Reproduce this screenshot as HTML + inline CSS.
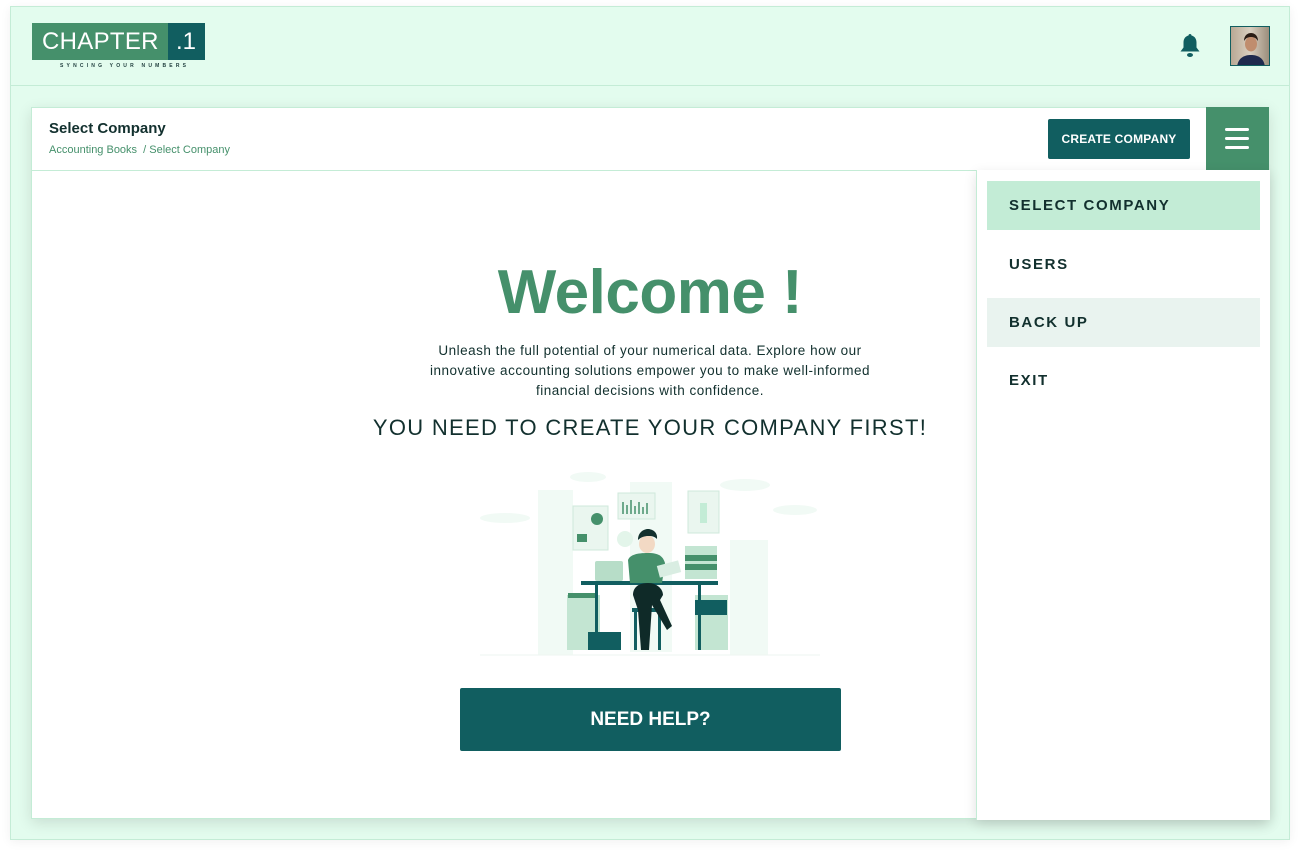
<!DOCTYPE html>
<html><head><meta charset="utf-8"><style>
*{margin:0;padding:0;box-sizing:border-box}
body{width:1300px;height:852px;background:#fff;font-family:"Liberation Sans",sans-serif;position:relative;overflow:hidden}
.frame{position:absolute;left:10px;top:6px;width:1280px;height:834px;background:#e3fcee;border:1px solid #c4ecd6;box-shadow:0 2px 10px rgba(0,0,0,0.06)}
.hdrline{position:absolute;left:10px;top:85px;width:1280px;height:1px;background:#c4ecd6}
.card{position:absolute;left:31px;top:107px;width:1238px;height:712px;background:#fff;border:1px solid #c4ecd6;box-shadow:0 4px 14px rgba(0,0,0,0.12)}
.abs{position:absolute}
</style></head><body>
<div class="frame"></div>
<div class="hdrline"></div>
<div class="abs" style="left:32px;top:23px;width:136px;height:37px;background:#45906b"></div>
<div class="abs" style="left:168px;top:23px;width:37px;height:37px;background:#115e60"></div>
<div class="abs" style="left:42px;top:27px;color:#fff;font-size:24px;line-height:30px;letter-spacing:0.3px">CHAPTER</div>
<div class="abs" style="left:176px;top:27px;color:#fff;font-size:24px;line-height:30px">.1</div>
<div class="abs" style="left:60px;top:63px;color:#1d3b3b;font-size:5px;letter-spacing:3.2px;font-weight:bold">SYNCING YOUR NUMBERS</div>
<svg class="abs" style="left:1178px;top:33px" width="24" height="26" viewBox="0 0 24 26"><path d="M12 1c1 0 1.5.7 1.5 1.5 3.3.8 5 3.5 5 7v5l3 4H2.5l3-4v-5c0-3.5 1.7-6.2 5-7C10.5 1.7 11 1 12 1z" fill="#115e60"/><ellipse cx="12" cy="22" rx="3" ry="2" fill="#115e60"/></svg>
<div class="abs" style="left:1230px;top:26px;width:40px;height:40px;border:1px solid #115e60;background:linear-gradient(90deg,#b9a894,#d9cfc0 50%,#9c8e7c);overflow:hidden">
<svg width="40" height="40" viewBox="0 0 40 40"><path d="M6 40c1-9 7-12 14-12s13 3 14 12z" fill="#1f2a4e"/><ellipse cx="20" cy="17" rx="6" ry="7.5" fill="#c08d6e"/><path d="M13 14c0-6 4-8 7-8s7 2 7 8c-2-3-4-4-7-4s-5 1-7 4z" fill="#2a1c14"/></svg></div>
<div class="card"></div>
<div class="abs" style="left:31px;top:170px;width:946px;height:1px;background:#c4ecd6"></div>
<div class="abs" style="left:49px;top:120px;font-size:15px;font-weight:bold;color:#12302e">Select Company</div>
<div class="abs" style="left:49px;top:144px;font-size:11px;color:#45906b">Accounting Books&nbsp; / Select Company</div>
<div class="abs" style="left:1048px;top:119px;width:142px;height:40px;background:#115e60;border-radius:2px;color:#fff;font-size:12px;font-weight:bold;text-align:center;line-height:40px;letter-spacing:0.2px">CREATE COMPANY</div>
<div class="abs" style="left:1206px;top:107px;width:63px;height:63px;background:#45906b"></div>
<div class="abs" style="left:1225px;top:128px;width:24px;height:3px;background:#fff;border-radius:2px"></div>
<div class="abs" style="left:1225px;top:137px;width:24px;height:3px;background:#fff;border-radius:2px"></div>
<div class="abs" style="left:1225px;top:146px;width:24px;height:3px;background:#fff;border-radius:2px"></div>
<div class="abs" style="left:976px;top:170px;width:294px;height:650px;background:#fff;border-left:1px solid #c4ecd6;box-shadow:0 4px 12px rgba(0,0,0,0.12)"></div>
<div class="abs" style="left:987px;top:181px;width:273px;height:49px;background:#c3ecd6"></div>
<div class="abs" style="left:987px;top:298px;width:273px;height:49px;background:#e9f3ef"></div>
<div class="abs" style="left:1009px;top:197px;font-size:15px;font-weight:bold;letter-spacing:1.6px;color:#12302e">SELECT COMPANY</div>
<div class="abs" style="left:1009px;top:256px;font-size:15px;font-weight:bold;letter-spacing:1.6px;color:#12302e">USERS</div>
<div class="abs" style="left:1009px;top:314px;font-size:15px;font-weight:bold;letter-spacing:1.6px;color:#12302e">BACK UP</div>
<div class="abs" style="left:1009px;top:372px;font-size:15px;font-weight:bold;letter-spacing:1.6px;color:#12302e">EXIT</div>
<div class="abs" style="left:350px;top:257px;width:600px;text-align:center;font-size:62px;font-weight:bold;color:#45906b;letter-spacing:-0.5px">Welcome !</div>
<div class="abs" style="left:300px;top:341px;width:700px;text-align:center;font-size:13.5px;line-height:20px;color:#12302e;letter-spacing:0.5px">Unleash the full potential of your numerical data. Explore how our<br>innovative accounting solutions empower you to make well-informed<br>financial decisions with confidence.</div>
<div class="abs" style="left:300px;top:415px;width:700px;text-align:center;font-size:22px;color:#12302e;letter-spacing:1.3px">YOU NEED TO CREATE YOUR COMPANY FIRST!</div>
<svg class="abs" style="left:470px;top:460px" width="360" height="210" viewBox="0 0 360 210">
<g fill="#f1faf5"><rect x="68" y="30" width="35" height="165"/><rect x="160" y="22" width="42" height="170"/><rect x="260" y="80" width="38" height="115"/><ellipse cx="35" cy="58" rx="25" ry="5"/><ellipse cx="325" cy="50" rx="22" ry="5"/><ellipse cx="275" cy="25" rx="25" ry="6"/><ellipse cx="118" cy="17" rx="18" ry="5"/></g>
<line x1="10" y1="195" x2="350" y2="195" stroke="#eef5f1"/>
<rect x="103" y="46" width="35" height="44" fill="#eaf6ef" stroke="#cfe8db"/><circle cx="127" cy="59" r="6" fill="#45906b"/><rect x="107" y="74" width="10" height="8" fill="#45906b"/>
<rect x="148" y="33" width="37" height="26" fill="#eaf6ef" stroke="#cfe8db"/><path d="M153 54V42M157 54V45M161 54V40M165 54V46M169 54V42M173 54V47M177 54V43" stroke="#45906b" stroke-width="1.5"/>
<rect x="218" y="31" width="31" height="42" fill="#eaf6ef" stroke="#cfe8db"/><rect x="230" y="43" width="7" height="20" fill="#c3ecd6"/>
<circle cx="155" cy="79" r="8" fill="#e3f5ea"/>
<g fill="#c3e5d2"><rect x="97" y="135" width="33" height="55"/><rect x="225" y="135" width="33" height="55"/><rect x="215" y="86" width="32" height="33"/></g>
<rect x="215" y="95" width="32" height="6" fill="#45906b"/><rect x="215" y="104" width="32" height="6" fill="#45906b"/>
<rect x="98" y="133" width="30" height="5" fill="#45906b"/>
<rect x="225" y="140" width="32" height="15" fill="#115e60"/>
<rect x="118" y="172" width="33" height="18" fill="#115e60"/>
<rect x="125" y="101" width="28" height="20" rx="2" fill="#b7ddc8"/>
<rect x="111" y="121" width="137" height="4" fill="#115e60"/>
<rect x="125" y="125" width="3" height="65" fill="#115e60"/><rect x="228" y="125" width="3" height="65" fill="#115e60"/>
<rect x="162" y="148" width="30" height="4" fill="#115e60"/><rect x="164" y="152" width="3" height="38" fill="#115e60"/><rect x="188" y="152" width="3" height="38" fill="#115e60"/>
<path d="M158 100c2-5 8-7 20-7s15 4 17 10l-3 20h-32z" fill="#45906b"/>
<ellipse cx="177" cy="84" rx="8" ry="9" fill="#f2d9c4"/>
<path d="M168 80c0-8 6-11 10-11s10 3 9 10c-3-3-6-3-9-3s-7 1-10 4z" fill="#12302e"/>
<rect x="188" y="103" width="22" height="12" fill="#d9ede2" transform="rotate(-15 199 109)"/>
<path d="M163 135c0-8 6-12 15-12s15 6 15 12l-3 5 12 26-5 4-15-25-3 45h-8l-3-40z" fill="#0f2a28"/>
</svg>
<div class="abs" style="left:460px;top:688px;width:381px;height:63px;background:#115e60;border-radius:2px;color:#fff;font-size:19px;font-weight:bold;text-align:center;line-height:63px">NEED HELP?</div>
</body></html>
